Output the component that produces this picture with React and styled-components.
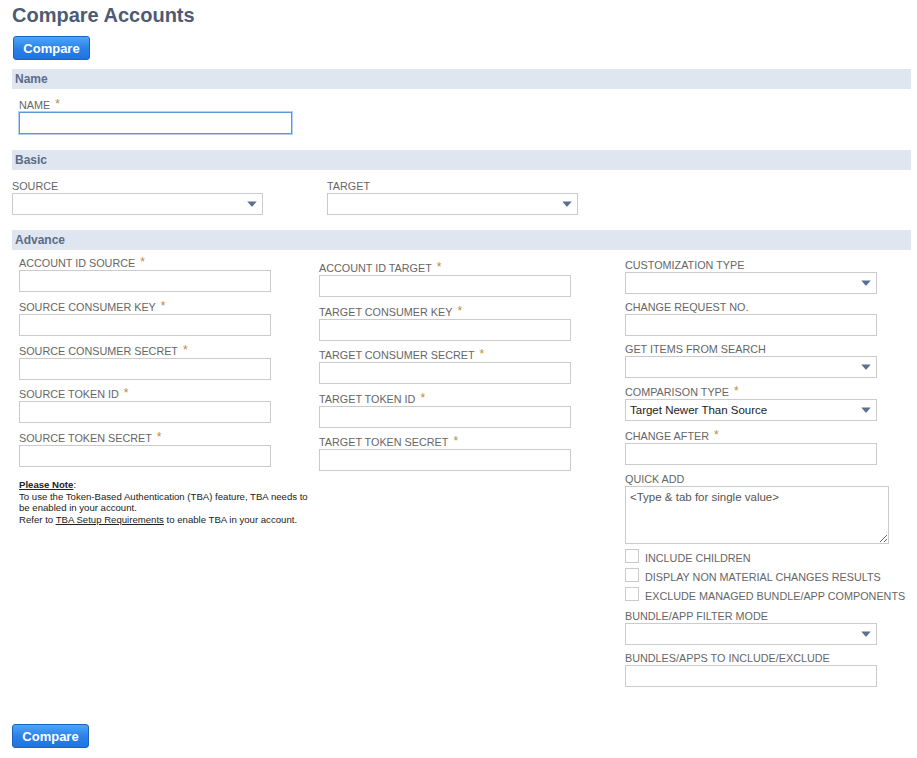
import React from "react";
import styled, { createGlobalStyle } from "styled-components";

const GlobalStyle = createGlobalStyle`
  html, body { margin: 0; padding: 0; background: #fff; }
  body { font-family: "Liberation Sans", Arial, sans-serif; color: #333; }
  * { box-sizing: border-box; }
`;

const Page = styled.div`
  padding: 3px 6px 0 12px;
  display: flex;
  flex-direction: column;
  align-items: stretch;
`;

const Title = styled.h1`
  margin: 0;
  font-size: 20px;
  line-height: 24px;
  font-weight: bold;
  color: #4d5b73;
`;

const Button = styled.button`
  align-self: flex-start;
  margin: ${(p) => p.$mt}px 0 0 ${(p) => p.$ml || 0}px;
  width: 77px;
  height: 24px;
  padding: 0;
  border: 1px solid #1c62be;
  border-radius: 3px;
  background: linear-gradient(#4ea6f7, #2a7fe6 55%, #1f74e0);
  color: #fff;
  font-family: "Liberation Sans", Arial, sans-serif;
  font-size: 13px;
  font-weight: bold;
  cursor: pointer;
`;

const SectionHeader = styled.div`
  margin-top: ${(p) => p.$mt}px;
  height: 20px;
  line-height: 20px;
  padding-left: 3px;
  background: #e0e6ef;
  color: #5a6c8a;
  font-size: 12px;
  font-weight: bold;
`;

const NameSection = styled.div`
  padding: 9px 0 0 7px;
  display: flex;
  flex-direction: column;
`;

const Label = styled.label`
  display: block;
  font-size: 10.8px;
  line-height: ${(p) => (p.$req ? 14 : 13)}px;
  color: #666;
  text-transform: uppercase;
  white-space: nowrap;
`;

const Star = styled.span`
  margin-left: 5px;
  color: #bb8b36;
  font-size: 12px;
  line-height: 0;
  vertical-align: 1px;
`;

const TextInput = styled.input`
  display: block;
  width: ${(p) => p.$w || 252}px;
  height: 22px;
  margin: 0;
  padding: 0 4px;
  border: 1px solid #cbcbcb;
  border-radius: 0;
  background: #fff;
  font-family: "Liberation Sans", Arial, sans-serif;
  font-size: 12px;
  color: #222;
  caret-color: #000;
  outline: none;
  &:focus {
    border-color: #5c98d8;
    box-shadow: 0 0 0 1px #b3d0f0;
  }
`;

const SelectBox = styled.div`
  display: flex;
  align-items: center;
  width: ${(p) => p.$w || 252}px;
  height: 22px;
  padding: 0 5px 0 4px;
  border: 1px solid #cbcbcb;
  background: #fff;
  font-size: 11.5px;
  color: #222;
`;

const SelectValue = styled.span`
  flex: 1;
  white-space: nowrap;
`;

const Arrow = () => (
  <svg width="10" height="6" viewBox="0 0 10 6" aria-hidden="true">
    <path d="M0.6 0.4 L9.4 0.4 Q9.8 0.4 9.5 0.8 L5.4 5.4 Q5 5.8 4.6 5.4 L0.5 0.8 Q0.2 0.4 0.6 0.4 Z" fill="#5b6f8f" />
  </svg>
);

const Select = ({ value, w }) => (
  <SelectBox $w={w}>
    <SelectValue>{value}</SelectValue>
    <Arrow />
  </SelectBox>
);

const BasicRow = styled.div`
  display: grid;
  grid-template-columns: 315px 1fr;
  padding-top: 10px;
`;

const AdvanceGrid = styled.div`
  display: grid;
  grid-template-columns: 300px 306px 1fr;
  padding-left: 7px;
  align-items: start;
`;

const Column = styled.div`
  display: flex;
  flex-direction: column;
  padding-top: ${(p) => p.$pt}px;
`;

const Field = styled.div`
  display: flex;
  flex-direction: column;
  margin-top: ${(p) => p.$mt || 0}px;
`;

const Note = styled.div`
  margin-top: 12px;
  font-size: 9.6px;
  line-height: 11.7px;
  color: #222;
  white-space: nowrap;
`;

const NoteTitle = styled.span`
  font-weight: bold;
  text-decoration: underline;
`;

const NoteLink = styled.a`
  color: #222;
  text-decoration: underline;
`;

const TextArea = styled.textarea`
  display: block;
  width: 264px;
  height: 58px;
  margin: 0;
  padding: 3px 4px;
  border: 1px solid #cbcbcb;
  border-radius: 0;
  font-family: "Liberation Sans", Arial, sans-serif;
  font-size: 11.5px;
  line-height: 14px;
  color: #555;
  outline: none;
`;

const CheckRow = styled.label`
  display: flex;
  align-items: flex-end;
  margin-top: 5px;
`;

const CheckBox = styled.input`
  appearance: none;
  -webkit-appearance: none;
  width: 14px;
  height: 14px;
  margin: 0 6px 0 0;
  border: 1px solid #cbcbcb;
  background: #fff;
  flex: none;
`;

const CheckText = styled.span`
  font-size: 10.8px;
  line-height: 11px;
  color: #666;
  text-transform: uppercase;
  white-space: nowrap;
  margin-bottom: -1px;
`;

const F = ({ label, req, mt, children }) => (
  <Field $mt={mt}>
    <Label $req={req}>
      {label}
      {req && <Star>*</Star>}
    </Label>
    {children}
  </Field>
);

export default function App() {
  return (
    <>
      <GlobalStyle />
      <Page>
        <Title>Compare Accounts</Title>
        <Button $mt={9} $ml={1}>Compare</Button>

        <SectionHeader $mt={9}>Name</SectionHeader>
        <NameSection>
          <F label="Name" req>
            <TextInput $w={273} autoFocus />
          </F>
        </NameSection>

        <SectionHeader $mt={16}>Basic</SectionHeader>
        <BasicRow>
          <F label="Source">
            <Select w={251} />
          </F>
          <F label="Target">
            <Select w={251} />
          </F>
        </BasicRow>

        <SectionHeader $mt={15}>Advance</SectionHeader>
        <AdvanceGrid>
          <Column $pt={6}>
            <F label="Account ID Source" req><TextInput /></F>
            <F label="Source Consumer Key" req mt={7.75}><TextInput /></F>
            <F label="Source Consumer Secret" req mt={7.75}><TextInput /></F>
            <F label="Source Token ID" req mt={7.75}><TextInput /></F>
            <F label="Source Token Secret" req mt={7.75}><TextInput /></F>
            <Note>
              <NoteTitle>Please Note</NoteTitle>:<br />
              To use the Token-Based Authentication (TBA) feature, TBA needs to<br />
              be enabled in your account.<br />
              Refer to <NoteLink href="#">TBA Setup Requirements</NoteLink> to enable TBA in your account.
            </Note>
          </Column>

          <Column $pt={11}>
            <F label="Account ID Target" req><TextInput /></F>
            <F label="Target Consumer Key" req mt={7.5}><TextInput /></F>
            <F label="Target Consumer Secret" req mt={7.5}><TextInput /></F>
            <F label="Target Token ID" req mt={7.5}><TextInput /></F>
            <F label="Target Token Secret" req mt={7.5}><TextInput /></F>
          </Column>

          <Column $pt={9}>
            <F label="Customization Type"><Select /></F>
            <F label="Change Request No." mt={7}><TextInput /></F>
            <F label="Get Items From Search" mt={7}><Select /></F>
            <F label="Comparison Type" req mt={7}><Select value="Target Newer Than Source" /></F>
            <F label="Change After" req mt={8}><TextInput /></F>
            <F label="Quick Add" mt={8}>
              <TextArea defaultValue="<Type & tab for single value>" />
            </F>
            <CheckRow><CheckBox type="checkbox" /><CheckText>Include Children</CheckText></CheckRow>
            <CheckRow><CheckBox type="checkbox" /><CheckText>Display Non Material Changes Results</CheckText></CheckRow>
            <CheckRow><CheckBox type="checkbox" /><CheckText>Exclude Managed Bundle/App Components</CheckText></CheckRow>
            <F label="Bundle/App Filter Mode" mt={9}><Select /></F>
            <F label="Bundles/Apps To Include/Exclude" mt={7}><TextInput /></F>
          </Column>
        </AdvanceGrid>

        <Button $mt={37}>Compare</Button>
      </Page>
    </>
  );
}
